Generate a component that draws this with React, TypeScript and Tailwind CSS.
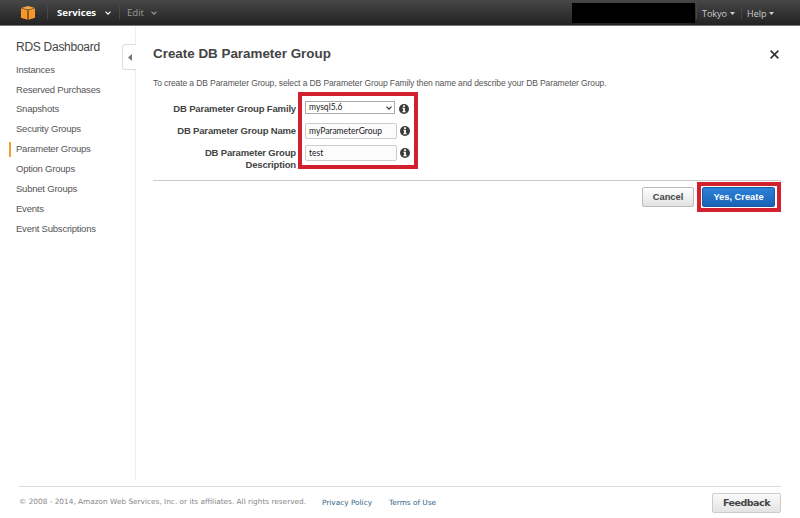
import React from 'react';

interface NavItem {
  label: string;
  active?: boolean;
}

interface FieldRowProps {
  label: React.ReactNode;
  className: string;
  children: React.ReactNode;
}

const navItems: NavItem[] = [
  { label: 'Instances' },
  { label: 'Reserved Purchases' },
  { label: 'Snapshots' },
  { label: 'Security Groups' },
  { label: 'Parameter Groups', active: true },
  { label: 'Option Groups' },
  { label: 'Subnet Groups' },
  { label: 'Events' },
  { label: 'Event Subscriptions' },
];

const CubeLogo = () => (
  <svg className="ml-[21px] h-[14px] w-[14px]" viewBox="0 0 14 14">
    <path d="M0 2.6 6.5 4v9.8L0 11.8zM14 2.6 7.5 4v9.8l6.5-2z" fill="#f9982a" />
    <path d="M6.5 4h1v9.8h-1z" fill="#8a5214" />
    <path d="M7 0 14 2.1 7 3.5 0 2.1z" fill="#f9a63f" />
    <path d="M3.2 3.5v9.2M10.8 3.5v9.2" stroke="#dd8a26" strokeWidth=".5" />
  </svg>
);

const Chevron = ({ className }: { className: string }) => (
  <svg className={className} width="6" height="4" viewBox="0 0 6 4">
    <path d="M.5.6 3 3.1 5.5.6" fill="none" stroke="currentColor" strokeWidth="1.2" />
  </svg>
);

const Caret = () => (
  <svg className="ml-[3px]" width="5" height="3" viewBox="0 0 5 3">
    <path d="M0 0h5L2.5 3z" fill="currentColor" />
  </svg>
);

const InfoIcon = ({ className }: { className: string }) => (
  <svg className={className} width="10" height="10" viewBox="0 0 10 10">
    <circle cx="5" cy="5" r="5" fill="#3c3c3c" />
    <path d="M4.1 1.3h1.8v1.6H4.1zM3.4 3.7h2.5v3.5h.8v1.1H3.3V7.2h.8V4.8h-.7z" fill="#fff" />
  </svg>
);

const TopBar = () => (
  <header className="flex h-[26px] shrink-0 items-center border-b border-[#777] bg-linear-to-b from-[#474747] to-[#222] font-['Open_Sans',sans-serif] text-[#ccc]">
    <CubeLogo />
    <span className="ml-3 h-[13px] w-px bg-[#484848]" />
    <span className="mt-[2px] ml-[9px] w-[40px] whitespace-nowrap text-[9.6px] font-bold text-white">Services</span>
    <Chevron className="mt-px ml-[8px] text-white" />
    <span className="ml-[8px] h-[13px] w-px bg-[#484848]" />
    <span className="mt-[2px] ml-[7px] w-[18px] text-[9.6px] text-[#999]">Edit</span>
    <Chevron className="mt-px ml-[6px] text-[#999]" />
    <span className="mt-px ml-auto h-5 w-[123px] bg-black" />
    <span className="ml-px h-[13px] w-px bg-[#484848]" />
    <span className="mt-[2px] ml-[5px] flex w-[39px] items-center text-[9px]">
      Tokyo
      <Caret />
    </span>
    <span className="h-[13px] w-px bg-[#484848]" />
    <span className="mt-[2px] mr-[18px] ml-[5px] flex w-[35px] items-center text-[9px]">
      Help
      <Caret />
    </span>
  </header>
);

const Sidebar = () => (
  <aside className="relative w-[136px] shrink-0 border-r border-[#eee] pt-[14px] text-[#555]">
    <h2 className="pl-4 text-[12px] leading-[15px] tracking-[-0.27px] text-[#444]">RDS Dashboard</h2>
    <ul className="mt-[5px] text-[9.5px] tracking-[-0.22px]">
      {navItems.map((item) => (
        <li key={item.label} className="flex h-[19.85px] items-center">
          <span className={`ml-[9px] h-[15px] w-[2px] ${item.active ? 'bg-[#f0a02c]' : ''}`} />
          <span className="ml-[5px] whitespace-nowrap">{item.label}</span>
        </li>
      ))}
    </ul>
    <button className="absolute top-[18px] -right-px flex h-[26px] w-[14px] items-center justify-center rounded-l-[3px] border border-r-0 border-[#ddd] bg-white">
      <svg width="4" height="7" viewBox="0 0 4 7">
        <path d="M4 0v7L0 3.5z" fill="#777" />
      </svg>
    </button>
  </aside>
);

const FieldRow = ({ label, className, children }: FieldRowProps) => (
  <div className={`flex items-start ${className}`}>
    <label className="w-[143px] shrink-0 pt-[3px] text-right text-[9.5px] leading-[11.5px] font-bold tracking-[-0.16px] whitespace-nowrap text-[#444]">
      {label}
    </label>
    {children}
  </div>
);

const TextField = ({ value }: { value: string }) => (
  <div className="mt-px ml-[9px] flex h-4 w-[92px] items-center rounded-[2px] border border-[#ccc] bg-[#fcfcfc] pt-px pl-[3px] font-['Lato',sans-serif] text-[8.5px] text-[#222]">
    {value}
  </div>
);

const ParameterForm = () => (
  <div className="relative h-[88px] pt-px">
    <FieldRow className="h-[22px]" label="DB Parameter Group Family">
      <div className="mt-px ml-[9px] flex h-[13px] w-[90px] items-center justify-between border border-[#aaa] bg-white pr-[2px] pl-[3px] font-['Lato',sans-serif] text-[8.5px] text-[#222]">
        mysql5.6
        <Chevron className="text-[#333]" />
      </div>
      <InfoIcon className="mt-[4px] ml-[4px]" />
    </FieldRow>
    <FieldRow className="h-[22px]" label="DB Parameter Group Name">
      <TextField value="myParameterGroup" />
      <InfoIcon className="mt-[4px] ml-[3px]" />
    </FieldRow>
    <FieldRow
      className="h-[26px]"
      label={
        <>
          DB Parameter Group
          <br />
          Description
        </>
      }
    >
      <TextField value="test" />
      <InfoIcon className="mt-[4px] ml-[3px]" />
    </FieldRow>
    <div className="absolute -top-[7px] left-[145px] h-[77px] w-[120px] border-4 border-[#d2202f]" />
  </div>
);

const CreateDialog = () => (
  <main className="flex-1 pt-[19px] pr-[19px] pl-[17px]">
    <div className="flex h-[18px] items-center justify-between">
      <h1 className="text-[13.4px] font-bold whitespace-nowrap text-[#444]">Create DB Parameter Group</h1>
      <svg className="mr-[2px]" width="9" height="9" viewBox="0 0 9 9">
        <path d="m.6.6 7.8 7.8M8.4.6.6 8.4" stroke="#333" strokeWidth="1.6" />
      </svg>
    </div>
    <p className="mt-[14px] h-[22px] text-[8.5px] leading-3 tracking-[-0.1px] whitespace-nowrap text-[#555]">
      To create a DB Parameter Group, select a DB Parameter Group Family then name and describe your DB Parameter Group.
    </p>
    <ParameterForm />
    <div className="-mt-[7px] flex justify-end border-t border-[#ccc] pt-[6px] text-[9.3px] font-bold">
      <button className="h-5 w-[52px] rounded-[2px] border border-[#bbb] bg-linear-to-b from-white to-[#e2e2e2] pt-px text-[#444]">
        Cancel
      </button>
      <div className="relative mr-[6px] ml-2">
        <button className="h-5 w-[73px] rounded-[2px] border border-[#1c5a9e] bg-linear-to-b from-[#2d80d8] to-[#1963b5] pt-px text-white">
          Yes, Create
        </button>
        <div className="absolute -top-[5px] -left-[5px] h-[30px] w-[84px] border-4 border-[#d2202f]" />
      </div>
    </div>
  </main>
);

const Footer = () => (
  <footer className="mx-[19px] mt-[6px] flex h-8 shrink-0 items-center border-t border-[#ddd] font-['DejaVu_Sans',sans-serif] text-[7.35px] whitespace-nowrap">
    <span className="-mt-px w-[303px] text-[#888]">
      © 2008 - 2014, Amazon Web Services, Inc. or its affiliates. All rights reserved.
    </span>
    <a className="w-[67px] text-[#2f6388]">Privacy Policy</a>
    <a className="text-[#2f6388]">Terms of Use</a>
    <button className="ml-auto h-5 w-[69px] rounded-[2px] border border-[#ccc] bg-linear-to-b from-[#fafafa] to-[#e3e3e3] pt-px text-[9.5px] font-bold tracking-[-0.5px] text-[#444]">
      Feedback
    </button>
  </footer>
);

const App = () => (
  <div className="flex h-screen flex-col overflow-hidden bg-white font-['Liberation_Sans',Arial,sans-serif]">
    <TopBar />
    <div className="flex flex-1">
      <Sidebar />
      <CreateDialog />
    </div>
    <Footer />
  </div>
);

export default App;
